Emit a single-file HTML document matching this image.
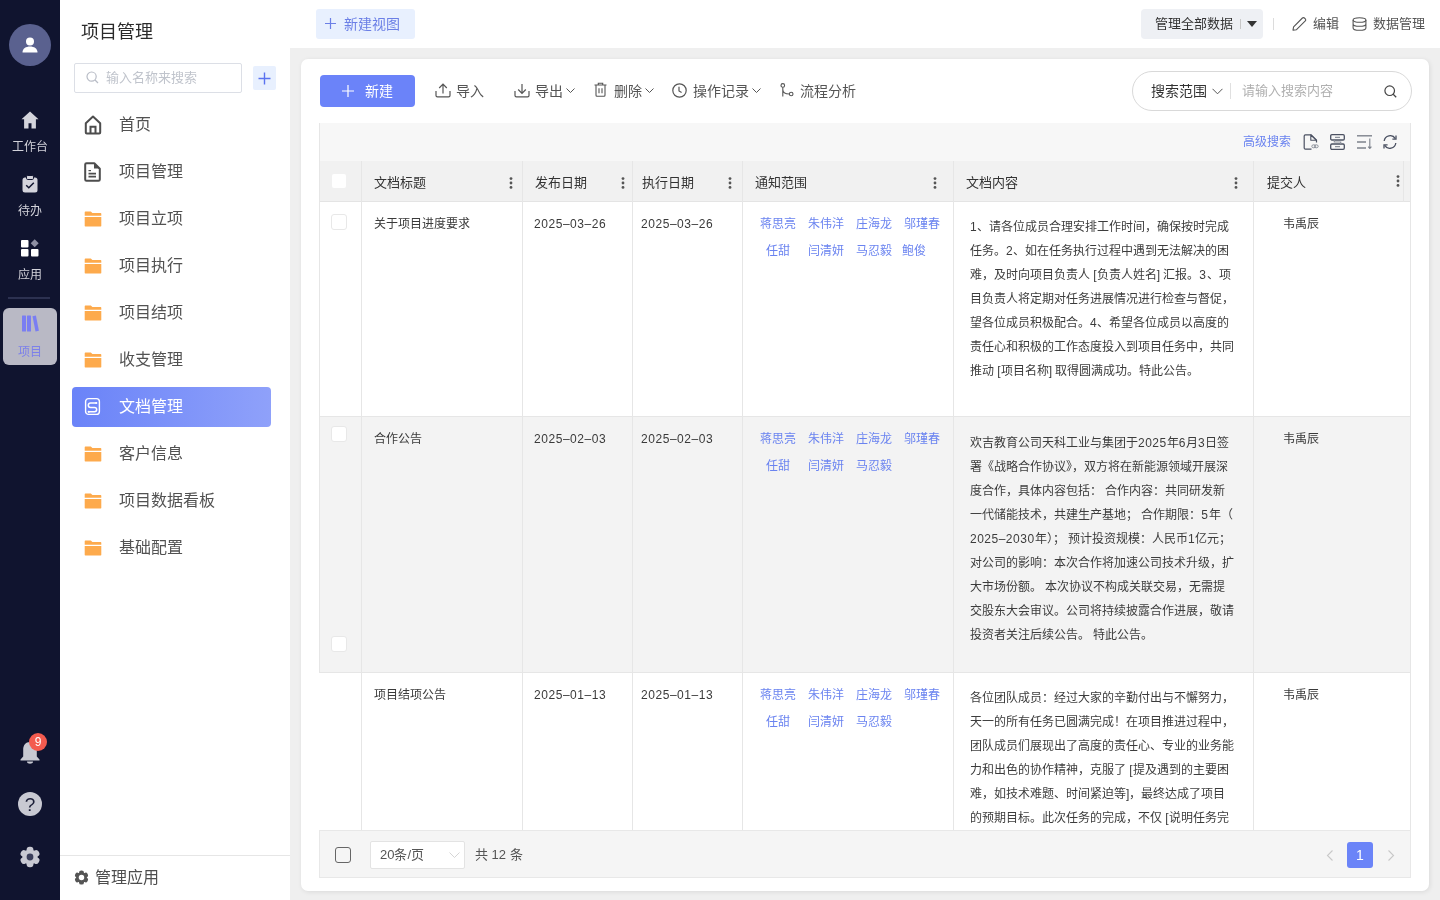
<!DOCTYPE html>
<html lang="zh-CN"><head><meta charset="utf-8">
<style>
*{box-sizing:border-box;margin:0;padding:0}
html,body{width:1440px;height:900px;overflow:hidden;font-family:"Liberation Sans",sans-serif;color:#333}
html{background:#fff}
.abs{position:absolute}
#rail{left:0;top:0;width:60px;height:900px;background:#10142f}
.rl{left:0;width:60px;text-align:center;font-size:12px;line-height:16px;color:#d2d2da}
#side{left:60px;top:0;width:230px;height:900px;background:#fff}
.mi{left:59px;font-size:16px;line-height:24px}
.tb{top:81px;font-size:14px;line-height:20px;color:#555}
.th{top:174px;font-size:13px;line-height:18px;color:#333}
.td{font-size:12px;line-height:17px;color:#3a3a3a;white-space:nowrap}
.nm{font-size:12px;line-height:17px;color:#6a83f0;white-space:nowrap}
.n{letter-spacing:0.5px}
.ct{font-size:12px;line-height:17px;color:#3c3c3c;white-space:nowrap}
#main{left:290px;top:0;width:1150px;height:900px;background:#efefef}
#topbar{left:290px;top:0;width:1150px;height:48px;background:#fff}
#card{left:301px;top:59px;width:1128px;height:832px;background:#fff;border-radius:7px;box-shadow:1px 1px 5px rgba(0,0,0,.09)}
</style></head>
<body><div id="root" style="position:absolute;left:0;top:0;width:1440px;height:900px;will-change:transform">
<div id="rail" class="abs">
  <div class="abs" style="left:9px;top:24px;width:42px;height:42px;border-radius:50%;background:#5a618f"></div>
  <svg class="abs" style="left:20px;top:35px" width="20" height="20" viewBox="0 0 20 20"><circle cx="10" cy="6.5" r="4" fill="#fff"/><path d="M2.5 17.5c0-4 3.4-6 7.5-6s7.5 2 7.5 6z" fill="#fff"/></svg>
  <svg class="abs" style="left:21px;top:111px" width="18" height="18" viewBox="0 0 18 18"><path d="M9 0.5L0.5 8.2h2.6V17.5h4.4v-5.2h3v5.2h4.4V8.2h2.6z" fill="#d4d4dc"/></svg>
  <div class="abs rl" style="top:139px">工作台</div>
  <svg class="abs" style="left:22px;top:175px" width="16" height="18" viewBox="0 0 16 18"><rect x="0.5" y="2.5" width="15" height="15" rx="2.5" fill="#d4d4dc"/><rect x="4.5" y="0.5" width="7" height="4" rx="1.2" fill="#d4d4dc" stroke="#10142f" stroke-width="1"/><path d="M4.2 10.2l2.6 2.6 5-5" stroke="#10142f" stroke-width="1.5" fill="none"/></svg>
  <div class="abs rl" style="top:203px">待办</div>
  <svg class="abs" style="left:21px;top:239px" width="18" height="18" viewBox="0 0 18 18"><rect x="0" y="1" width="7.5" height="7.5" rx="1" fill="#fff"/><rect x="0" y="10" width="7.5" height="7.5" rx="1" fill="#fff"/><rect x="10" y="10" width="7.5" height="7.5" rx="1" fill="#fff"/><path d="M13.7 0.3l4 4-4 4-4-4z" fill="#8e8fa3"/></svg>
  <div class="abs rl" style="top:267px">应用</div>
  <div class="abs" style="left:8px;top:297px;width:42px;height:2px;background:#2c3150"></div>
  <div class="abs" style="left:3px;top:308px;width:54px;height:57px;border-radius:6px;background:#b9b9c5"></div>
  <svg class="abs" style="left:22px;top:315px" width="17" height="17" viewBox="0 0 17 17"><rect x="0" y="0.5" width="4" height="16" rx="0.5" fill="#7a7ef2"/><rect x="5" y="0.5" width="4" height="16" rx="0.5" fill="#7a7ef2"/><path d="M10.5 1.2l3.4-0.8 3 15.4-3.4 0.8z" fill="#7a7ef2"/></svg>
  <div class="abs rl" style="top:344px;color:#7c80ea">项目</div>
  <svg class="abs" style="left:19px;top:739px" width="22" height="25" viewBox="0 0 22 25"><path d="M11 3c-4.5 0-6.8 3.5-6.8 7.5v7L1.5 20.5v1h19v-1l-2.7-3v-7C17.8 6.5 15.5 3 11 3z" fill="#c8c9d2"/><path d="M8 22.5a3 2.2 0 0 0 6 0z" fill="#c8c9d2"/></svg>
  <div class="abs" style="left:29px;top:733px;width:18px;height:18px;border-radius:50%;background:#f35b4f;color:#fff;font-size:12px;line-height:18px;text-align:center">9</div>
  <div class="abs" style="left:18px;top:792px;width:24px;height:24px;border-radius:50%;background:#c8c9d2;color:#1a1d36;font-size:19px;font-weight:normal;line-height:25px;text-align:center">?</div>
  <svg class="abs" style="left:19px;top:846px" width="22" height="22" viewBox="0 0 22 22"><g fill="#c8c9d2"><circle cx="11" cy="11" r="7.6"/><rect x="7.6" y="0.8" width="6.8" height="20.4" rx="3"/><rect x="7.6" y="0.8" width="6.8" height="20.4" rx="3" transform="rotate(60 11 11)"/><rect x="7.6" y="0.8" width="6.8" height="20.4" rx="3" transform="rotate(120 11 11)"/></g><circle cx="11" cy="11" r="3.4" fill="#3a3e5a"/></svg>
</div>
<div id="side" class="abs">
  <div class="abs" style="left:21px;top:18.5px;font-size:18px;line-height:26px;color:#2a2a2a">项目管理</div>
  <div class="abs" style="left:14px;top:63px;width:168px;height:30px;border:1px solid #dcdfe6;border-radius:2px"></div>
  <svg class="abs" style="left:26px;top:71px" width="13" height="13" viewBox="0 0 13 13"><circle cx="5.6" cy="5.6" r="4.6" stroke="#b8bcc6" stroke-width="1.2" fill="none"/><path d="M9 9l3 3" stroke="#b8bcc6" stroke-width="1.2"/></svg>
  <div class="abs" style="left:46px;top:69px;font-size:13px;line-height:18px;color:#c0c4cc">输入名称来搜索</div>
  <div class="abs" style="left:193px;top:66px;width:23px;height:24px;background:#e8f0fe;border-radius:2px"></div>
  <svg class="abs" style="left:198px;top:72px" width="13" height="13" viewBox="0 0 13 13"><path d="M6.5 0.5v12M0.5 6.5h12" stroke="#5a72f0" stroke-width="1.4"/></svg>
  <div class="abs" style="left:12px;top:387px;width:199px;height:40px;border-radius:4px;background:linear-gradient(90deg,#6a83f8,#8fa1fa)"></div>
  <div class="abs mi" style="top:113px;color:#525252">首页</div>
  <svg class="abs" style="left:24px;top:115px" width="18" height="20" viewBox="0 0 18 20"><path d="M1.8 8.2L9 1.6l7.2 6.6v9.3c0 .6-.4 1-1 1H2.8c-.6 0-1-.4-1-1z" stroke="#4d4d4d" stroke-width="2" fill="none" stroke-linejoin="round"/><path d="M6.5 18.4v-6.6h5v6.6" stroke="#4d4d4d" stroke-width="2" fill="none"/></svg>
  <div class="abs mi" style="top:160px;color:#525252">项目管理</div>
  <svg class="abs" style="left:24px;top:162px" width="17" height="20" viewBox="0 0 17 20"><path d="M2.5 1.2h7.8l5.5 5.5v10.8c0 .7-.6 1.3-1.3 1.3H2.5c-.7 0-1.3-.6-1.3-1.3V2.5c0-.7.6-1.3 1.3-1.3z" stroke="#4d4d4d" stroke-width="2" fill="none" stroke-linejoin="round"/><path d="M10 1.5v5h5.5z" fill="#4d4d4d"/><path d="M4.5 11.6h7.5M4.5 14.6h7.5" stroke="#4d4d4d" stroke-width="1.8"/><path d="M4.5 8.6h2.5" stroke="#4d4d4d" stroke-width="1.2"/></svg>
  <div class="abs mi" style="top:207px;color:#525252">项目立项</div>
<svg class="abs" style="left:24px;top:211px" width="18" height="16" viewBox="0 0 18 16"><path d="M0.7 1.2c0-.4.3-.7.7-.7h5.4l1.6 1.6h8.2c.4 0 .7.3.7.7v1.9H0.7z" fill="#fdaa4c"/><path d="M0.7 5.9h16.6v9.2c0 .3-.3.5-.6.5H1.3c-.3 0-.6-.2-.6-.5z" fill="#fdaa4c"/></svg>
  <div class="abs mi" style="top:254px;color:#525252">项目执行</div>
<svg class="abs" style="left:24px;top:258px" width="18" height="16" viewBox="0 0 18 16"><path d="M0.7 1.2c0-.4.3-.7.7-.7h5.4l1.6 1.6h8.2c.4 0 .7.3.7.7v1.9H0.7z" fill="#fdaa4c"/><path d="M0.7 5.9h16.6v9.2c0 .3-.3.5-.6.5H1.3c-.3 0-.6-.2-.6-.5z" fill="#fdaa4c"/></svg>
  <div class="abs mi" style="top:301px;color:#525252">项目结项</div>
<svg class="abs" style="left:24px;top:305px" width="18" height="16" viewBox="0 0 18 16"><path d="M0.7 1.2c0-.4.3-.7.7-.7h5.4l1.6 1.6h8.2c.4 0 .7.3.7.7v1.9H0.7z" fill="#fdaa4c"/><path d="M0.7 5.9h16.6v9.2c0 .3-.3.5-.6.5H1.3c-.3 0-.6-.2-.6-.5z" fill="#fdaa4c"/></svg>
  <div class="abs mi" style="top:348px;color:#525252">收支管理</div>
<svg class="abs" style="left:24px;top:352px" width="18" height="16" viewBox="0 0 18 16"><path d="M0.7 1.2c0-.4.3-.7.7-.7h5.4l1.6 1.6h8.2c.4 0 .7.3.7.7v1.9H0.7z" fill="#fdaa4c"/><path d="M0.7 5.9h16.6v9.2c0 .3-.3.5-.6.5H1.3c-.3 0-.6-.2-.6-.5z" fill="#fdaa4c"/></svg>
  <div class="abs mi" style="top:395px;color:#fff">文档管理</div>
  <svg class="abs" style="left:24px;top:397px" width="17" height="19" viewBox="0 0 17 19"><rect x="1.6" y="1.6" width="13.8" height="15.8" rx="3" stroke="#fff" stroke-width="1.4" fill="none"/><path d="M12.5 6H6.5a2.2 2.2 0 0 0 0 4.4h4a2.2 2.2 0 0 1 0 4.4H4.5" stroke="#fff" stroke-width="1.5" fill="none"/><circle cx="12.3" cy="6" r="1.1" fill="#fff"/><circle cx="4.7" cy="14.8" r="1.1" fill="#fff"/></svg>
  <div class="abs mi" style="top:442px;color:#525252">客户信息</div>
<svg class="abs" style="left:24px;top:446px" width="18" height="16" viewBox="0 0 18 16"><path d="M0.7 1.2c0-.4.3-.7.7-.7h5.4l1.6 1.6h8.2c.4 0 .7.3.7.7v1.9H0.7z" fill="#fdaa4c"/><path d="M0.7 5.9h16.6v9.2c0 .3-.3.5-.6.5H1.3c-.3 0-.6-.2-.6-.5z" fill="#fdaa4c"/></svg>
  <div class="abs mi" style="top:489px;color:#525252">项目数据看板</div>
<svg class="abs" style="left:24px;top:493px" width="18" height="16" viewBox="0 0 18 16"><path d="M0.7 1.2c0-.4.3-.7.7-.7h5.4l1.6 1.6h8.2c.4 0 .7.3.7.7v1.9H0.7z" fill="#fdaa4c"/><path d="M0.7 5.9h16.6v9.2c0 .3-.3.5-.6.5H1.3c-.3 0-.6-.2-.6-.5z" fill="#fdaa4c"/></svg>
  <div class="abs mi" style="top:536px;color:#525252">基础配置</div>
<svg class="abs" style="left:24px;top:540px" width="18" height="16" viewBox="0 0 18 16"><path d="M0.7 1.2c0-.4.3-.7.7-.7h5.4l1.6 1.6h8.2c.4 0 .7.3.7.7v1.9H0.7z" fill="#fdaa4c"/><path d="M0.7 5.9h16.6v9.2c0 .3-.3.5-.6.5H1.3c-.3 0-.6-.2-.6-.5z" fill="#fdaa4c"/></svg>
  <div class="abs" style="left:0;top:855px;width:230px;height:1px;background:#e6e6e6"></div>
  <svg class="abs" style="left:14px;top:870px" width="15" height="15" viewBox="0 0 22 22"><g fill="#555"><circle cx="11" cy="11" r="7.6"/><rect x="7.4" y="0.6" width="7.2" height="20.8" rx="3.2"/><rect x="7.4" y="0.6" width="7.2" height="20.8" rx="3.2" transform="rotate(60 11 11)"/><rect x="7.4" y="0.6" width="7.2" height="20.8" rx="3.2" transform="rotate(120 11 11)"/></g><circle cx="11" cy="11" r="4" fill="#fff"/></svg>
  <div class="abs" style="left:35px;top:866px;font-size:16px;line-height:24px;color:#4d4d4d">管理应用</div>
</div>
<div id="main" class="abs"></div>
<div id="topbar" class="abs"></div>
<div id="card" class="abs"></div>
<!-- TOPBAR -->
<div class="abs" style="left:316px;top:9px;width:99px;height:30px;background:#e8f0fe;border-radius:3px"></div>
<svg class="abs" style="left:325px;top:18px" width="11" height="11" viewBox="0 0 11 11"><path d="M5.5 0v11M0 5.5h11" stroke="#6b7fe6" stroke-width="1.2"/></svg>
<div class="abs" style="left:344px;top:14px;font-size:14px;line-height:20px;color:#6b7fe6">新建视图</div>
<div class="abs" style="left:1141px;top:9px;width:122px;height:30px;background:#eef0f4;border-radius:4px"></div>
<div class="abs" style="left:1155px;top:15px;font-size:13px;line-height:18px;color:#333">管理全部数据</div>
<div class="abs" style="left:1240px;top:19px;width:1px;height:10px;background:#c8c8c8"></div>
<svg class="abs" style="left:1247px;top:21px" width="10" height="6" viewBox="0 0 10 6"><path d="M0 0h10L5 6z" fill="#333"/></svg>
<div class="abs" style="left:1273px;top:18px;width:1px;height:12px;background:#dcdcdc"></div>
<svg class="abs" style="left:1292px;top:17px" width="15" height="14" viewBox="0 0 15 14"><path d="M1 13.2l.6-3.4L10.4 1a1.4 1.4 0 0 1 2 0l.9.9a1.4 1.4 0 0 1 0 2L4.5 12.7z" stroke="#555" stroke-width="1.1" fill="none" stroke-linejoin="round"/></svg>
<div class="abs" style="left:1313px;top:15px;font-size:13px;line-height:18px;color:#555">编辑</div>
<svg class="abs" style="left:1352px;top:17px" width="15" height="14" viewBox="0 0 15 14"><ellipse cx="7.5" cy="3" rx="6.4" ry="2.3" stroke="#555" stroke-width="1.1" fill="none"/><path d="M1.1 3v8c0 1.3 2.9 2.3 6.4 2.3s6.4-1 6.4-2.3V3M1.1 7c0 1.3 2.9 2.3 6.4 2.3s6.4-1 6.4-2.3" stroke="#555" stroke-width="1.1" fill="none"/></svg>
<div class="abs" style="left:1373px;top:15px;font-size:13px;line-height:18px;color:#555">数据管理</div>
<!-- TOOLBAR -->
<div class="abs" style="left:320px;top:75px;width:95px;height:32px;background:#6b83f9;border-radius:4px"></div>
<svg class="abs" style="left:342px;top:85px" width="12" height="12" viewBox="0 0 12 12"><path d="M6 0v12M0 6h12" stroke="#fff" stroke-width="1.2"/></svg>
<div class="abs" style="left:365px;top:81px;font-size:14px;line-height:20px;color:#fff">新建</div>
<svg class="abs" style="left:435px;top:83px" width="16" height="15" viewBox="0 0 16 15"><path d="M1 8v4.5c0 .8.6 1.4 1.4 1.4h11.2c.8 0 1.4-.6 1.4-1.4V8" stroke="#555" stroke-width="1.2" fill="none"/><path d="M8 10.5V1.2M4.2 5L8 1.2 11.8 5" stroke="#555" stroke-width="1.2" fill="none"/></svg>
<div class="abs tb" style="left:456px">导入</div>
<svg class="abs" style="left:514px;top:83px" width="16" height="15" viewBox="0 0 16 15"><path d="M1 8v4.5c0 .8.6 1.4 1.4 1.4h11.2c.8 0 1.4-.6 1.4-1.4V8" stroke="#555" stroke-width="1.2" fill="none"/><path d="M8 1v9.3M4.2 6.5L8 10.3l3.8-3.8" stroke="#555" stroke-width="1.2" fill="none"/></svg>
<div class="abs tb" style="left:535px">导出</div>
<svg class="abs" style="left:566px;top:88px" width="9" height="5" viewBox="0 0 9 5"><path d="M.5.5l4 4 4-4" stroke="#555" stroke-width="1" fill="none"/></svg>
<svg class="abs" style="left:594px;top:82px" width="13" height="15" viewBox="0 0 13 15"><path d="M.5 3h12M4.3 3V1.2h4.4V3M2 3v10.3c0 .6.4 1 1 1h7c.6 0 1-.4 1-1V3M5 6.2v5M8 6.2v5" stroke="#555" stroke-width="1.1" fill="none"/></svg>
<div class="abs tb" style="left:614px">删除</div>
<svg class="abs" style="left:645px;top:88px" width="9" height="5" viewBox="0 0 9 5"><path d="M.5.5l4 4 4-4" stroke="#555" stroke-width="1" fill="none"/></svg>
<svg class="abs" style="left:672px;top:83px" width="15" height="15" viewBox="0 0 15 15"><circle cx="7.5" cy="7.5" r="6.7" stroke="#555" stroke-width="1.2" fill="none"/><path d="M7 3.8V8l2.6 1.6" stroke="#555" stroke-width="1.2" fill="none"/></svg>
<div class="abs tb" style="left:693px">操作记录</div>
<svg class="abs" style="left:752px;top:88px" width="9" height="5" viewBox="0 0 9 5"><path d="M.5.5l4 4 4-4" stroke="#555" stroke-width="1" fill="none"/></svg>
<svg class="abs" style="left:780px;top:83px" width="14" height="14" viewBox="0 0 14 14"><circle cx="2.8" cy="2.4" r="1.8" stroke="#555" stroke-width="1.1" fill="none"/><circle cx="11.2" cy="11" r="1.8" stroke="#555" stroke-width="1.1" fill="none"/><path d="M2.8 4.2v9.3M2.8 6.5c0 2.8 2 4.5 6.6 4.5" stroke="#555" stroke-width="1.1" fill="none"/></svg>
<div class="abs tb" style="left:800px">流程分析</div>
<!-- SEARCH -->
<div class="abs" style="left:1132px;top:71px;width:280px;height:40px;border:1px solid #d9d9d9;border-radius:20px"></div>
<div class="abs" style="left:1151px;top:81px;font-size:14px;line-height:20px;color:#333">搜索范围</div>
<svg class="abs" style="left:1212px;top:88px" width="11" height="7" viewBox="0 0 11 7"><path d="M.5.8l5 5 5-5" stroke="#555" stroke-width="1" fill="none"/></svg>
<div class="abs" style="left:1230px;top:83px;width:1px;height:16px;background:#e0e0e0"></div>
<div class="abs" style="left:1242px;top:82px;font-size:13px;line-height:18px;color:#b0b0b0">请输入搜索内容</div>
<svg class="abs" style="left:1384px;top:85px" width="13" height="13" viewBox="0 0 13 13"><circle cx="5.7" cy="5.7" r="4.8" stroke="#444" stroke-width="1.2" fill="none"/><path d="M9.2 9.2l3 3" stroke="#444" stroke-width="1.3"/></svg>

<!-- TABLE -->
<div class="abs" style="left:319px;top:123px;width:1092px;height:38px;background:#f7f7f7"></div>
<div class="abs" style="left:1243px;top:134px;font-size:12px;line-height:17px;color:#6a83f0">高级搜索</div>
<svg class="abs" style="left:1303px;top:134px" width="16" height="16" viewBox="0 0 16 16"><path d="M8.5 15.2H2.4c-.7 0-1.2-.5-1.2-1.2V2c0-.7.5-1.2 1.2-1.2h5.8l5.3 5.3V8.5" stroke="#4b5162" stroke-width="1.2" fill="none" stroke-linejoin="round"/><path d="M7.8 1v5.2h5.5z" fill="none" stroke="#4b5162" stroke-width="1.1" stroke-linejoin="round"/><ellipse cx="10.7" cy="12.3" rx="1.9" ry="1.5" stroke="#8d929c" stroke-width="1" fill="none"/><ellipse cx="13.3" cy="12.3" rx="1.9" ry="1.5" stroke="#8d929c" stroke-width="1" fill="none"/></svg>
<svg class="abs" style="left:1330px;top:134px" width="15" height="16" viewBox="0 0 15 16"><rect x=".7" y=".7" width="13.6" height="5.3" rx="1.2" stroke="#4b5162" stroke-width="1.3" fill="none"/><rect x=".7" y="10" width="13.6" height="5.3" rx="1.2" stroke="#4b5162" stroke-width="1.3" fill="none"/><path d="M5 3.4h5M5 12.6h5M4.3 6v2h6.4v2" stroke="#8d929c" stroke-width="1.2" fill="none"/></svg>
<svg class="abs" style="left:1357px;top:135px" width="15" height="14" viewBox="0 0 15 14"><path d="M0 .8h15" stroke="#7d828c" stroke-width="1.4"/><path d="M0 7h9M0 13h9" stroke="#7d828c" stroke-width="1.4"/><path d="M12.8 3.5v10M11.2 11.6l1.6 1.9 1.6-1.9" stroke="#7d828c" stroke-width="1.1" fill="none"/></svg>
<svg class="abs" style="left:1382px;top:135px" width="16" height="14" viewBox="0 0 16 14"><path d="M2.2 6A6 6 0 0 1 13.3 3.6M13.8 8A6 6 0 0 1 2.7 10.4" stroke="#4b5162" stroke-width="1.3" fill="none"/><path d="M14 .6v3.6h-3.6M2 13.4V9.8h3.6" stroke="#4b5162" stroke-width="1.3" fill="none"/></svg>
<div class="abs" style="left:319px;top:161px;width:1092px;height:41px;background:#f1f1f1;border-bottom:1px solid #e4e4e4"></div>
<div class="abs" style="left:332px;top:174px;width:14px;height:14px;background:#fff;border-radius:2px"></div>
<div class="abs th" style="left:374px">文档标题</div>
<svg class="abs" style="left:509px;top:177px" width="4" height="12" viewBox="0 0 4 12"><circle cx="2" cy="1.6" r="1.4" fill="#555"/><circle cx="2" cy="6" r="1.4" fill="#555"/><circle cx="2" cy="10.4" r="1.4" fill="#555"/></svg>
<div class="abs th" style="left:535px">发布日期</div>
<svg class="abs" style="left:621px;top:177px" width="4" height="12" viewBox="0 0 4 12"><circle cx="2" cy="1.6" r="1.4" fill="#555"/><circle cx="2" cy="6" r="1.4" fill="#555"/><circle cx="2" cy="10.4" r="1.4" fill="#555"/></svg>
<div class="abs th" style="left:642px">执行日期</div>
<svg class="abs" style="left:728px;top:177px" width="4" height="12" viewBox="0 0 4 12"><circle cx="2" cy="1.6" r="1.4" fill="#555"/><circle cx="2" cy="6" r="1.4" fill="#555"/><circle cx="2" cy="10.4" r="1.4" fill="#555"/></svg>
<div class="abs th" style="left:755px">通知范围</div>
<svg class="abs" style="left:933px;top:177px" width="4" height="12" viewBox="0 0 4 12"><circle cx="2" cy="1.6" r="1.4" fill="#555"/><circle cx="2" cy="6" r="1.4" fill="#555"/><circle cx="2" cy="10.4" r="1.4" fill="#555"/></svg>
<div class="abs th" style="left:966px">文档内容</div>
<svg class="abs" style="left:1234px;top:177px" width="4" height="12" viewBox="0 0 4 12"><circle cx="2" cy="1.6" r="1.4" fill="#555"/><circle cx="2" cy="6" r="1.4" fill="#555"/><circle cx="2" cy="10.4" r="1.4" fill="#555"/></svg>
<div class="abs th" style="left:1267px">提交人</div>
<svg class="abs" style="left:1396px;top:175px" width="4" height="12" viewBox="0 0 4 12"><circle cx="2" cy="1.6" r="1.4" fill="#555"/><circle cx="2" cy="6" r="1.4" fill="#555"/><circle cx="2" cy="10.4" r="1.4" fill="#555"/></svg>
<div class="abs" style="left:319px;top:416px;width:1092px;height:257px;background:#f3f3f3;border-top:1px solid #e6e6e6;border-bottom:1px solid #e6e6e6"></div>
<div class="abs" style="left:319px;top:123px;width:1px;height:550px;background:#e6e6e6"></div>
<div class="abs" style="left:1410px;top:123px;width:1px;height:707px;background:#e6e6e6"></div>
<div class="abs" style="left:361px;top:161px;width:1px;height:669px;background:#e6e6e6"></div>
<div class="abs" style="left:522px;top:161px;width:1px;height:669px;background:#e6e6e6"></div>
<div class="abs" style="left:632px;top:161px;width:1px;height:669px;background:#e6e6e6"></div>
<div class="abs" style="left:742px;top:161px;width:1px;height:669px;background:#e6e6e6"></div>
<div class="abs" style="left:953px;top:161px;width:1px;height:669px;background:#e6e6e6"></div>
<div class="abs" style="left:1253px;top:161px;width:1px;height:669px;background:#e6e6e6"></div>
<div class="abs" style="left:1403px;top:161px;width:1px;height:41px;background:#e6e6e6"></div>
<div class="abs" style="left:331px;top:214px;width:16px;height:16px;background:#fff;border:1px solid #e8e8e8;border-radius:3px"></div>
<div class="abs" style="left:331px;top:426px;width:16px;height:16px;background:#fff;border:1px solid #e8e8e8;border-radius:3px"></div>
<div class="abs" style="left:331px;top:636px;width:16px;height:16px;background:#fff;border:1px solid #e8e8e8;border-radius:3px"></div>
<div class="abs" style="left:319px;top:202px;width:1092px;height:628px;overflow:hidden">
<div class="abs td" style="left:55px;top:14px">关于项目进度要求</div>
<div class="abs td" style="left:215px;top:14px;letter-spacing:0.55px">2025–03–26</div>
<div class="abs td" style="left:322px;top:14px;letter-spacing:0.55px">2025–03–26</div>
<div class="abs td" style="left:964px;top:14px">韦禹辰</div>
<div class="abs nm" style="left:441px;top:14px">蒋思亮</div>
<div class="abs nm" style="left:489px;top:14px">朱伟洋</div>
<div class="abs nm" style="left:537px;top:14px">庄海龙</div>
<div class="abs nm" style="left:585px;top:14px">邬瑾春</div>
<div class="abs nm" style="left:447px;top:41px">任甜</div>
<div class="abs nm" style="left:489px;top:41px">闫清妍</div>
<div class="abs nm" style="left:537px;top:41px">马忍毅</div>
<div class="abs nm" style="left:583px;top:41px">鲍俊</div>
<div class="abs ct" style="left:651px;top:17px"><span class="n">1</span>、请各位成员合理安排工作时间，确保按时完成</div>
<div class="abs ct" style="left:651px;top:41px">任务。<span class="n">2</span>、如在任务执行过程中遇到无法解决的困</div>
<div class="abs ct" style="left:651px;top:65px">难，及时向项目负责人 [负责人姓名] 汇报。<span class="n">3</span>、项</div>
<div class="abs ct" style="left:651px;top:89px">目负责人将定期对任务进展情况进行检查与督促，</div>
<div class="abs ct" style="left:651px;top:113px">望各位成员积极配合。<span class="n">4</span>、希望各位成员以高度的</div>
<div class="abs ct" style="left:651px;top:137px">责任心和积极的工作态度投入到项目任务中，共同</div>
<div class="abs ct" style="left:651px;top:161px">推动 [项目名称] 取得圆满成功。特此公告。</div>
<div class="abs td" style="left:55px;top:229px">合作公告</div>
<div class="abs td" style="left:215px;top:229px;letter-spacing:0.55px">2025–02–03</div>
<div class="abs td" style="left:322px;top:229px;letter-spacing:0.55px">2025–02–03</div>
<div class="abs td" style="left:964px;top:229px">韦禹辰</div>
<div class="abs nm" style="left:441px;top:229px">蒋思亮</div>
<div class="abs nm" style="left:489px;top:229px">朱伟洋</div>
<div class="abs nm" style="left:537px;top:229px">庄海龙</div>
<div class="abs nm" style="left:585px;top:229px">邬瑾春</div>
<div class="abs nm" style="left:447px;top:256px">任甜</div>
<div class="abs nm" style="left:489px;top:256px">闫清妍</div>
<div class="abs nm" style="left:537px;top:256px">马忍毅</div>
<div class="abs ct" style="left:651px;top:233px">欢吉教育公司天科工业与集团于<span class="n">2025</span>年<span class="n">6</span>月<span class="n">3</span>日签</div>
<div class="abs ct" style="left:651px;top:257px">署《战略合作协议》，双方将在新能源领域开展深</div>
<div class="abs ct" style="left:651px;top:281px">度合作，具体内容包括： 合作内容：共同研发新</div>
<div class="abs ct" style="left:651px;top:305px">一代储能技术，共建生产基地； 合作期限：<span class="n">5</span>年（</div>
<div class="abs ct" style="left:651px;top:329px"><span class="n">2025–2030</span>年）； 预计投资规模：人民币<span class="n">1</span>亿元；</div>
<div class="abs ct" style="left:651px;top:353px">对公司的影响：本次合作将加速公司技术升级，扩</div>
<div class="abs ct" style="left:651px;top:377px">大市场份额。 本次协议不构成关联交易，无需提</div>
<div class="abs ct" style="left:651px;top:401px">交股东大会审议。公司将持续披露合作进展，敬请</div>
<div class="abs ct" style="left:651px;top:425px">投资者关注后续公告。 特此公告。</div>
<div class="abs td" style="left:55px;top:485px">项目结项公告</div>
<div class="abs td" style="left:215px;top:485px;letter-spacing:0.55px">2025–01–13</div>
<div class="abs td" style="left:322px;top:485px;letter-spacing:0.55px">2025–01–13</div>
<div class="abs td" style="left:964px;top:485px">韦禹辰</div>
<div class="abs nm" style="left:441px;top:485px">蒋思亮</div>
<div class="abs nm" style="left:489px;top:485px">朱伟洋</div>
<div class="abs nm" style="left:537px;top:485px">庄海龙</div>
<div class="abs nm" style="left:585px;top:485px">邬瑾春</div>
<div class="abs nm" style="left:447px;top:512px">任甜</div>
<div class="abs nm" style="left:489px;top:512px">闫清妍</div>
<div class="abs nm" style="left:537px;top:512px">马忍毅</div>
<div class="abs ct" style="left:651px;top:488px">各位团队成员：经过大家的辛勤付出与不懈努力，</div>
<div class="abs ct" style="left:651px;top:512px">天一的所有任务已圆满完成！在项目推进过程中，</div>
<div class="abs ct" style="left:651px;top:536px">团队成员们展现出了高度的责任心、专业的业务能</div>
<div class="abs ct" style="left:651px;top:560px">力和出色的协作精神，克服了 [提及遇到的主要困</div>
<div class="abs ct" style="left:651px;top:584px">难，如技术难题、时间紧迫等]，最终达成了项目</div>
<div class="abs ct" style="left:651px;top:608px">的预期目标。此次任务的完成，不仅 [说明任务完</div>
</div>
<div class="abs" style="left:319px;top:830px;width:1092px;height:48px;background:#f5f5f5;border:1px solid #e8e8e8"></div>
<div class="abs" style="left:335px;top:847px;width:16px;height:16px;border:1px solid #666;border-radius:3px"></div>
<div class="abs" style="left:370px;top:841px;width:95px;height:28px;background:#fff;border:1px solid #e3e3e3;border-radius:2px"></div>
<div class="abs" style="left:380px;top:846px;font-size:13px;line-height:18px;color:#555">20条/页</div>
<svg class="abs" style="left:449px;top:852px" width="11" height="6" viewBox="0 0 11 6"><path d="M.5.5l5 5 5-5" stroke="#d5d5d5" stroke-width="1" fill="none"/></svg>
<div class="abs" style="left:475px;top:846px;font-size:13px;line-height:18px;color:#555">共 12 条</div>
<svg class="abs" style="left:1326px;top:850px" width="7" height="11" viewBox="0 0 7 11"><path d="M6.5.5l-5 5 5 5" stroke="#c8c8c8" stroke-width="1.1" fill="none"/></svg>
<div class="abs" style="left:1347px;top:842px;width:26px;height:26px;background:#6b84f8;border-radius:3px;color:#fff;font-size:14px;line-height:26px;text-align:center">1</div>
<svg class="abs" style="left:1388px;top:850px" width="7" height="11" viewBox="0 0 7 11"><path d="M.5.5l5 5-5 5" stroke="#c8c8c8" stroke-width="1.1" fill="none"/></svg>
</div></body></html>
